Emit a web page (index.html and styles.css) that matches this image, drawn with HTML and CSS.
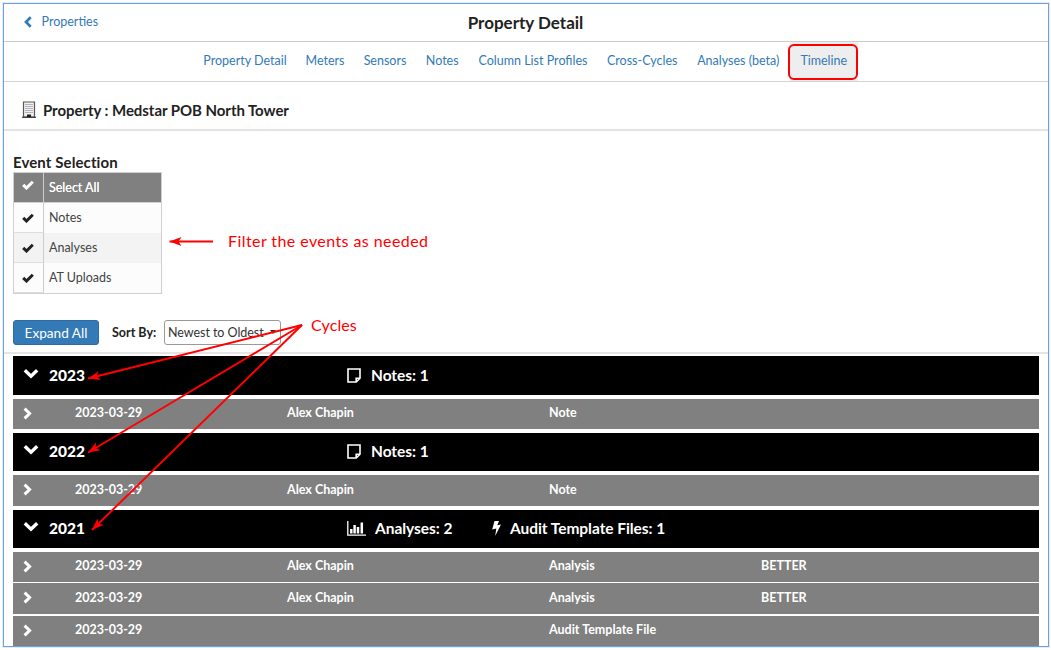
FILE: index.html
```html
<!DOCTYPE html>
<html lang="en">
<head>
<meta charset="utf-8">
<title>Property Detail</title>
<link rel="stylesheet" href="styles.css">
</head>
<body>
<svg class="defs" width="0" height="0">
  <symbol id="check" viewBox="0 0 12 10"><path d="M1.2 4.800 4.500 8 10.800 1.800" fill="none" stroke="currentColor" stroke-width="3"/></symbol>
  <symbol id="down" viewBox="0 0 16 11"><path d="M1.8 2.2 8 8.2 14.2 2.2" fill="none" stroke="currentColor" stroke-width="3.4"/></symbol>
  <symbol id="right" viewBox="0 0 9 13"><path d="M1.6 1.6 6.6 6.5 1.6 11.4" fill="none" stroke="currentColor" stroke-width="3"/></symbol>
  <symbol id="note" viewBox="0 0 14 15"><path d="M1 1H13V10.2L9.2 14H1ZM9.2 14V10.2H13" fill="none" stroke="currentColor" stroke-width="1.6"/></symbol>
</svg>
<div class="window">
  <header class="topbar">
    <a class="back"><svg width="8" height="12" viewBox="0 0 8 12"><path d="M6.700 1.200 2 6l4.700 4.800" fill="none" stroke="currentColor" stroke-width="2.700"/></svg>Properties</a>
    <h1>Property Detail</h1>
  </header>
  <nav class="tabs">
    <a>Property Detail</a><a>Meters</a><a>Sensors</a><a>Notes</a><a>Column List Profiles</a><a>Cross-Cycles</a><a>Analyses (beta)</a><a class="active">Timeline</a>
  </nav>
  <div class="property">
    <svg width="14" height="17" viewBox="0 0 14 17"><path d="M1.500 1h11v15h-11z" fill="#f4f0ee" stroke="#5a5654" stroke-width="1.200"/><path d="M4 3v10M6 3v10M8 3v10M10 3v10" stroke="#6d7896" stroke-width="1" stroke-dasharray="1 1"/><path d="M5.500 14h3v2h-3zM0 16.200h14" fill="#222" stroke="#222" stroke-width="1.100"/></svg>
    <h2>Property : Medstar POB North Tower</h2>
  </div>
  <section class="controls">
    <h3>Event Selection</h3>
    <div class="events">
      <div class="event head"><span class="box"><svg><use href="#check"/></svg></span><span class="name">Select All</span></div>
      <div class="event"><span class="box"><svg><use href="#check"/></svg></span><span class="name">Notes</span></div>
      <div class="event alt"><span class="box"><svg><use href="#check"/></svg></span><span class="name">Analyses</span></div>
      <div class="event"><span class="box"><svg><use href="#check"/></svg></span><span class="name">AT Uploads</span></div>
    </div>
    <div class="actions">
      <button class="expand">Expand All</button>
      <span class="sort-label">Sort By:</span>
      <div class="select">Newest to Oldest<i></i></div>
    </div>
  </section>
  <main class="timeline">
    <div class="cycle"><svg class="down"><use href="#down"/></svg><b class="year">2023</b><span class="stat"><svg class="note"><use href="#note"/></svg>Notes: 1</span></div>
    <div class="row"><svg class="right"><use href="#right"/></svg><span>2023-03-29</span><span>Alex Chapin</span><span>Note</span><span></span></div>
    <div class="cycle"><svg class="down"><use href="#down"/></svg><b class="year">2022</b><span class="stat"><svg class="note"><use href="#note"/></svg>Notes: 1</span></div>
    <div class="row tall"><svg class="right"><use href="#right"/></svg><span>2023-03-29</span><span>Alex Chapin</span><span>Note</span><span></span></div>
    <div class="cycle"><svg class="down"><use href="#down"/></svg><b class="year">2021</b><span class="stat analyses"><svg class="chart" viewBox="0 0 19 15"><path d="M.8 0V14.200H19" fill="none" stroke="currentColor" stroke-width="1.300"/><path d="M4.300 12.500V8M7.600 12.500V4M11 12.500V6M14.800 12.500V1.500" stroke="currentColor" stroke-width="2.500"/></svg>Analyses: 2</span><span class="stat"><svg class="bolt" viewBox="0 0 9 15"><path d="M2.500 0H7L5.300 4.300 9 3.500 3.200 15 4.300 7.500.2 8.500Z" fill="currentColor"/></svg>Audit Template Files: 1</span></div>
    <div class="row"><svg class="right"><use href="#right"/></svg><span>2023-03-29</span><span>Alex Chapin</span><span>Analysis</span><span>BETTER</span></div>
    <div class="row tall near"><svg class="right"><use href="#right"/></svg><span>2023-03-29</span><span>Alex Chapin</span><span>Analysis</span><span>BETTER</span></div>
    <div class="row near last"><svg class="right"><use href="#right"/></svg><span>2023-03-29</span><span></span><span>Audit Template File</span><span></span></div>
  </main>
</div>
<div class="callout-box"></div>
<span class="callout filter">Filter the events as needed</span>
<span class="callout cycles">Cycles</span>
<svg class="arrows" width="1051" height="650" viewBox="0 0 1051 650">
  <defs><marker id="head" viewBox="0 0 12 10" refX="12" refY="5" markerWidth="12" markerHeight="10" markerUnits="userSpaceOnUse" orient="auto"><path d="M12 5 0 .5 3 5 0 9.500Z" fill="#f00"/></marker></defs>
  <g stroke="#f00" stroke-width="2">
    <path d="M213 241.500H169.500" marker-end="url(#head)"/>
    <path d="M302 325 88 378.500" marker-end="url(#head)"/>
    <path d="M302 325 88 452.500" marker-end="url(#head)"/>
    <path d="M302 325 92 530" marker-end="url(#head)"/>
  </g>
</svg>
</body>
</html>
```
FILE: styles.css
```css
* { box-sizing: border-box; }
body {
  margin: 0;
  width: 1051px;
  height: 650px;
  overflow: hidden;
  background: #fff;
  color: #222;
  font-family: Lato, "Noto Sans", sans-serif;
  font-size: 12.5px;
}
h1, h2, h3 { margin: 0; font-weight: 700; }
svg { display: block; flex: none; }
.defs { position: absolute; }
.window {
  width: 1046px;
  height: 644px;
  margin: 3px 0 0 3px;
  border: 1px solid #709fe9;
  box-shadow: 0 0 0 1px #e3ecfa;
  overflow: hidden;
}
.topbar {
  display: grid;
  grid-template-columns: 1fr auto 1fr;
  align-items: center;
  height: 38px;
  border-bottom: 1px solid #ccc;
}
.topbar h1 { font-size: 17px; line-height: 36px; margin-left: -1px; }
.back {
  display: flex;
  align-items: center;
  gap: 10px;
  padding-left: 19.5px;
  color: #337ab7;
  line-height: 34px;
  margin-top: -2px;
}
.tabs {
  display: grid;
  grid-template-columns: 103px 57px 63px 51.5px 130px 88.5px 103.5px 67.5px;
  justify-content: center;
  height: 40px;
  border-bottom: 1px solid #d3d3d3;
  color: #337ab7;
  text-align: center;
  line-height: 37px;
  padding-right: 1px;
}
.active { background: #eee; }
.property {
  display: flex;
  align-items: center;
  gap: 7px;
  height: 49px;
  padding: 8px 0 0 18px;
  border-bottom: 2px solid #e3e3e3;
}
.property h2 { font-size: 15px; letter-spacing: -.05px; }
.controls {
  height: 223px;
  padding: 21px 0 0 9px;
  border-bottom: 2px solid #e5e5e5;
}
.controls h3 { font-size: 15px; line-height: 20px; letter-spacing: .1px; }
.events {
  width: 149px;
  border: 1px solid #d0d0d0;
}
.event {
  display: flex;
  height: 30px;
  background: #fcfcfc;
}
.event.alt { background: #f3f3f3; }
.event.head { background: #808080; color: #fff; border-bottom: 1px solid #d0d0d0; }
.box {
  display: flex;
  align-items: center;
  justify-content: center;
  width: 30px;
  padding-right: 1px;
  border-right: 1px solid #ccc;
  border-bottom: 1px solid #ddd;
}
.box svg { width: 12px; height: 10px; }
.head .box { border-bottom: 0; padding-bottom: 5px; }
.name { padding-left: 5px; line-height: 30px; color: #444; }
.head .name { color: #fff; line-height: 29px; text-shadow: 0 0 .5px #fff; }
.actions {
  display: flex;
  align-items: center;
  height: 25px;
  margin-top: 26px;
}
.expand {
  width: 86px;
  height: 25px;
  padding: 0;
  border: 1px solid #2e6da4;
  border-radius: 3px;
  background: #337ab7;
  color: #fff;
  font: 13.6px Lato, sans-serif;
}
.sort-label { width: 52px; margin-left: 13px; font-weight: 700; white-space: nowrap; }
.select {
  display: flex;
  align-items: center;
  justify-content: space-between;
  width: 117px;
  height: 25px;
  padding: 0 4px 1px 3px;
  border: 1px solid #999;
  border-radius: 3px;
  color: #333;
  letter-spacing: -.05px;
  white-space: nowrap;
}
.select i { border: 3px solid transparent; border-top: 4px solid #333; border-bottom: 0; }
.timeline { width: 1035px; padding: 2px 0 0 9px; color: #fff; }
.cycle {
  display: flex;
  align-items: center;
  height: 39px;
  padding-bottom: 2px;
  margin-bottom: 4px;
  background: #000;
  font-size: 15.5px;
  font-weight: 700;
}
.row + .cycle { height: 38px; }
.down { width: 16px; height: 11px; margin: -3px 10px 0 10px; }
.year { width: 298px; }
.stat { display: flex; align-items: center; letter-spacing: -.05px; }
.analyses { width: 145px; }
.note, .chart, .bolt { margin-top: 1px; }
.note { width: 14px; height: 15px; margin-right: 10px; }
.chart { width: 19px; height: 15px; margin-right: 9px; }
.bolt { width: 9px; height: 15px; margin-right: 9px; }
.row {
  display: grid;
  grid-template-columns: 62px 212px 262px 212px 1fr;
  align-items: center;
  height: 30px;
  margin-bottom: 4px;
  background: #808080;
  font-size: 12.5px;
  font-weight: 700;
}
.row span { padding-bottom: 3px; }
.row.tall { height: 31px; }
.right { width: 9px; height: 13px; margin: -2px 0 0 10px; }
.row.near { margin-top: -2px; }
.row.tall.near { margin-top: -3px; }
.callout-box {
  position: absolute;
  left: 788px;
  top: 44px;
  width: 70px;
  height: 36px;
  border: 2px solid #f00;
  border-radius: 6px;
}
.callout { position: absolute; color: #f00; font-size: 16px; line-height: 20px; white-space: nowrap; }
.filter { left: 228px; top: 231px; letter-spacing: .42px; }
.cycles { left: 311px; top: 315px; letter-spacing: .1px; }
.arrows { position: absolute; left: 0; top: 0; }
```
